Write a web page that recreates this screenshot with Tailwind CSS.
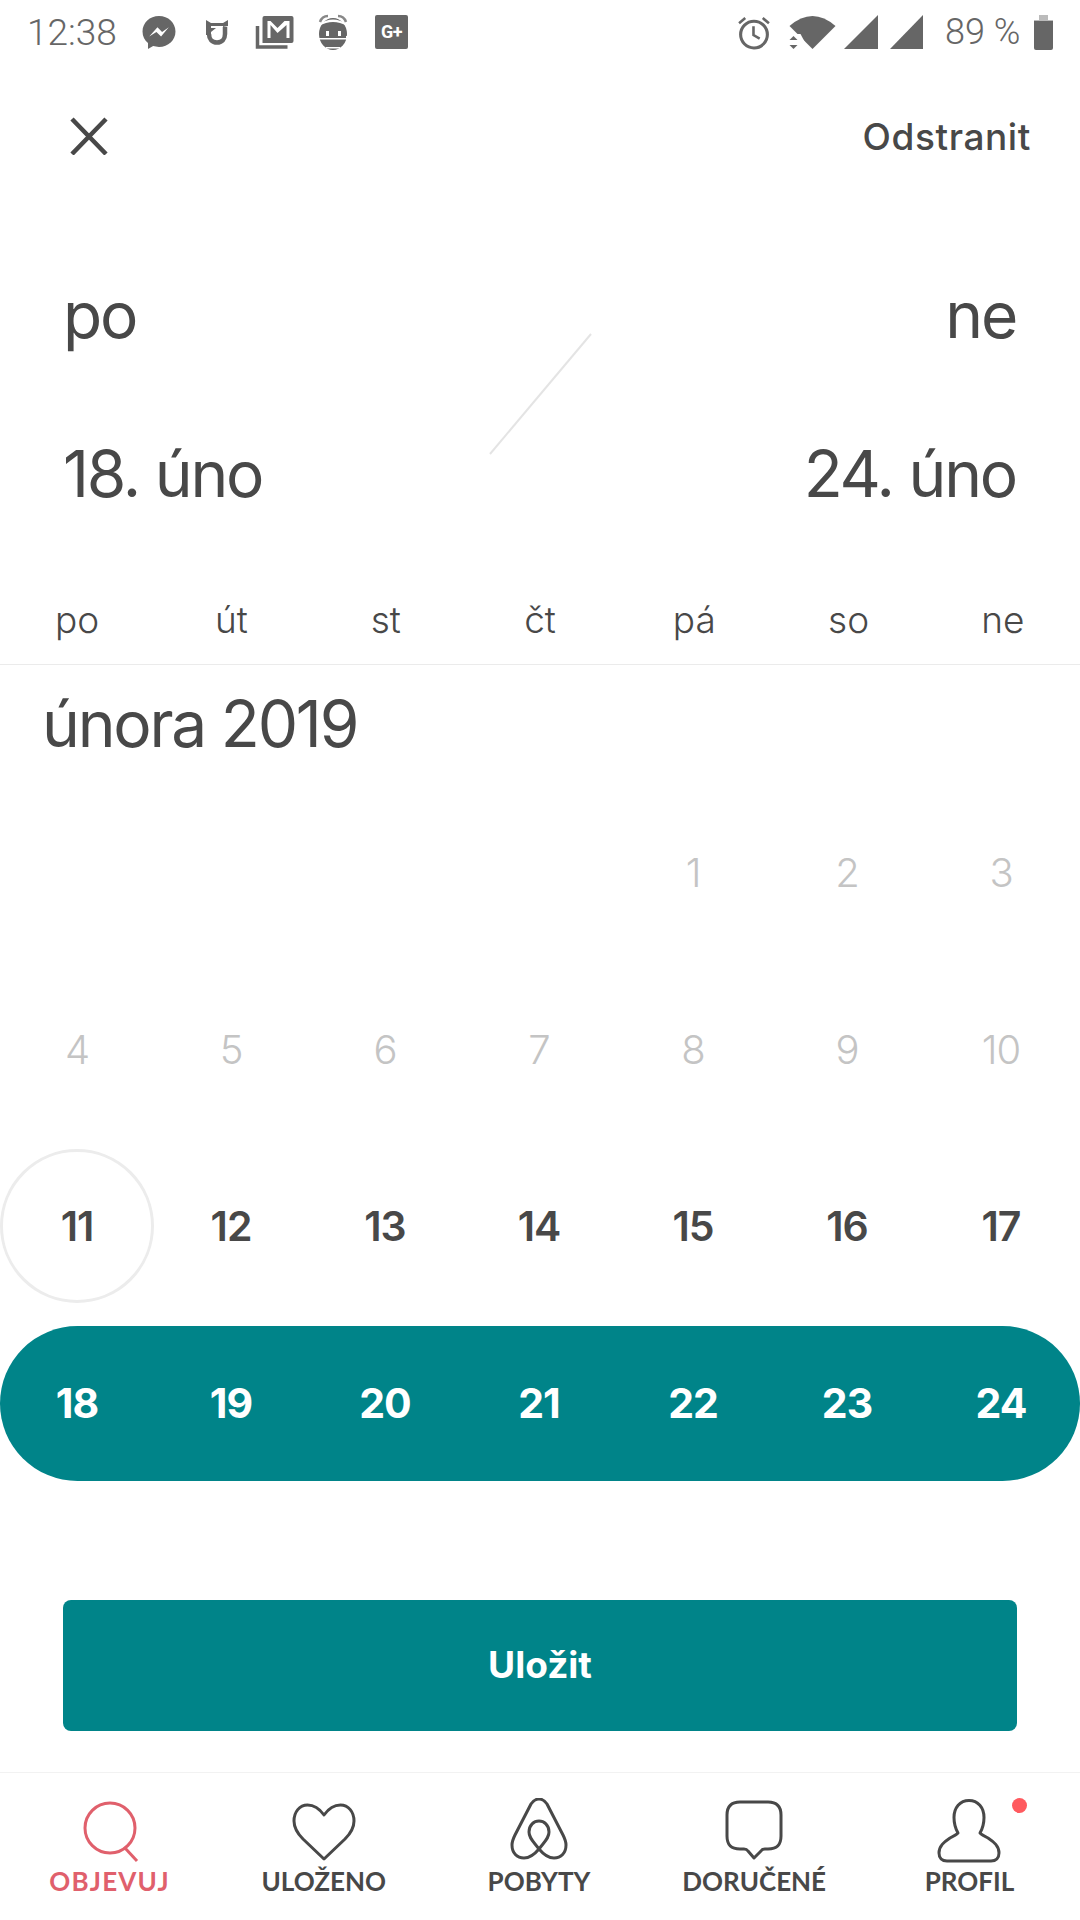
<!DOCTYPE html>
<html><head><meta charset="utf-8"><script src="https://cdn.jsdelivr.net/npm/@tailwindcss/browser@4"></script></head>
<body class="bg-white">
<div class="w-[1080px] h-[1920px] overflow-hidden flex flex-col bg-white text-[#484848] font-['Inter',sans-serif]">
  <!-- status bar -->
  <div class="h-[64px] flex items-center justify-between pl-[27px] pr-[27px] text-[#666] shrink-0">
    <div class="flex items-center">
      <span class="w-[91px] font-['Roboto',sans-serif] text-[37px] font-light leading-none">12:38</span>
      <svg class="ml-[24px]" width="34" height="35" viewBox="0 0 33 34"><path fill="#666" d="M16.500 1C7.500 1 .5 7.600.5 16c0 4.600 2 8.500 5.300 11.300V33l5-2.800c1.800.5 3.700.8 5.700.8 9 0 16-6.600 16-15S25.500 1 16.500 1z"/><path fill="#fff" d="M7 21l8-9 4.500 4.500L26 12l-7.500 9-4.500-4.500z"/></svg>
      <svg class="ml-[30px]" width="22" height="26" viewBox="0 0 22 26"><path fill="#666" d="M0 1l5 3h12l5-3v6l-5 1v-1H5v9H0z"/><path fill="none" stroke="#666" stroke-width="4.500" d="M3 15c0 5 3 8.500 8 8.500s8-3.500 8-8.500V8"/><path fill="#666" d="M5 9h5L5 13z"/></svg>
      <svg class="ml-[27px]" width="39" height="34" viewBox="0 0 38 34"><path fill="#666" d="M9 1h27a2 2 0 0 1 2 2v23a2 2 0 0 1-2 2H7V3a2 2 0 0 1 2-2z"/><path fill="#fff" d="M12 23V6h3l7 7 7-7h5v17h-3V10l-9 8-7-8v13z"/><path fill="none" stroke="#666" stroke-width="3.500" d="M2 11v21h30"/></svg>
      <svg class="ml-[24px]" width="31" height="37" viewBox="0 0 31 37"><ellipse cx="15" cy="20" rx="14" ry="16" fill="#666"/><path fill="#fff" d="M1 10Q15 1 29 10l0 2Q15 4 1 12z"/><path fill="none" stroke="#888" stroke-width="2.500" d="M2 8Q4 2 10 2M28 8Q26 2 20 2"/><path fill="#fff" d="M8 17h3v5H8zM20 17h3v5h-3zM1 24h28v1.500H1zM28 22h2v9h-2zM8 33h14v1.500H8z"/></svg>
      <div class="ml-[26px] w-[33px] h-[34px] rounded-[2px] bg-[#666] flex items-center justify-center text-white text-[18px] font-bold font-['Roboto',sans-serif] leading-none tracking-[-0.5px]">G+</div>
    </div>
    <div class="flex items-center">
      <svg width="32" height="35" viewBox="0 0 31 34"><circle cx="15.500" cy="19" r="13" fill="none" stroke="#666" stroke-width="3"/><path fill="none" stroke="#666" stroke-width="2.500" d="M15 11v8.500l6 3.500M1 8l6-5M30 8l-6-5"/></svg>
      <svg class="ml-[19px]" width="47" height="34" viewBox="0 0 46 34"><path fill="#666" d="M0 11Q23-9 46 11L23 34z"/><path fill="#fff" d="M0 19h11l8 15H0z"/><path fill="#666" d="M4 21l4 4H0zM4 34l4-4H0z"/></svg>
      <svg class="ml-[8px]" width="34" height="34" viewBox="0 0 34 34"><path fill="#666" d="M34 0v34H0z"/></svg>
      <svg class="ml-[11px]" width="35" height="34" viewBox="0 0 33 34"><path fill="#666" d="M33 0v34H0z"/></svg>
      <span class="ml-[21px] w-[75px] whitespace-nowrap font-['Roboto',sans-serif] text-[36px] font-light leading-none">89 %</span>
      <svg class="ml-[14px]" width="19" height="35" viewBox="0 0 19 35"><path fill="#bbb" d="M5 0h9v5h5v6H0V5h5z"/><path fill="#666" d="M0 6h19v27a2 2 0 0 1-2 2H2a2 2 0 0 1-2-2z"/></svg>
    </div>
  </div>
  <!-- header -->
  <div class="h-[144px] flex items-center justify-between pl-[70px] pr-[49px] shrink-0">
    <svg width="38" height="38" viewBox="0 0 38 38"><path stroke="#484848" stroke-width="4.500" d="M2 2l34 35M36 2L2 37"/></svg>
    <span class="whitespace-nowrap text-[37px] font-medium leading-none tracking-[0.6px]">Odstranit</span>
  </div>
  <!-- date summary -->
  <div class="relative h-[376px] pl-[63px] pr-[64px] shrink-0 flex justify-between text-[64px] leading-none font-normal tracking-[-2.2px]">
    <div class="flex flex-col gap-[95px] pt-[75px]"><span>po</span><span>18. úno</span></div>
    <div class="flex flex-col gap-[95px] pt-[75px] items-end"><span>ne</span><span>24. úno</span></div>
    <svg class="absolute left-[488px] top-[125px]" width="104" height="122" viewBox="0 0 104 122"><path stroke="#e4e4e4" stroke-width="2" d="M103 1L2 121"/></svg>
  </div>
  <!-- week header -->
  <div class="h-[81px] shrink-0 grid grid-cols-7 pt-[17px] text-[37px] leading-none border-b border-[#ebebeb] font-light">
    <span class="text-center">po</span><span class="text-center">út</span><span class="text-center">st</span><span class="text-center">čt</span><span class="text-center">pá</span><span class="text-center">so</span><span class="text-center">ne</span>
  </div>
  <!-- month -->
  <div class="pl-[42px] pt-[27px] h-[130px] shrink-0 text-[64px] leading-none font-normal tracking-[-2.2px]">února 2019</div>
  <!-- days -->
  <div class="grid grid-cols-7 pr-[2px] auto-rows-[154px] gap-y-[23px] shrink-0 text-[40px] tracking-[-1px] text-[#c4c4c4] font-light [&>*]:flex [&>*]:items-center [&>*]:justify-center [&>*]:pt-[2px]">
    <span></span><span></span><span></span><span></span><span>1</span><span>2</span><span>3</span>
    <span>4</span><span>5</span><span>6</span><span>7</span><span>8</span><span>9</span><span>10</span>
  </div>
  <div class="mt-[23px] grid grid-cols-7 pr-[2px] h-[154px] shrink-0 text-[41px] tracking-[-1px] font-semibold text-[#484848] [&>*]:flex [&>*]:items-center [&>*]:justify-center [&>*]:pt-[2px]">
    <span class="w-[154px] h-[154px] rounded-full border-[3px] border-[#ececec]">11</span><span>12</span><span>13</span><span>14</span><span>15</span><span>16</span><span>17</span>
  </div>
  <div class="mt-[23px] grid grid-cols-7 pr-[2px] h-[155px] rounded-full bg-[#008489] shrink-0 text-[41px] tracking-[-1px] font-bold text-white [&>*]:flex [&>*]:items-center [&>*]:justify-center">
    <span>18</span><span>19</span><span>20</span><span>21</span><span>22</span><span>23</span><span>24</span>
  </div>
  <!-- save -->
  <div class="mt-[119px] mx-[63px] h-[131px] pb-[2px] rounded-[8px] bg-[#008489] text-white text-[37px] font-bold flex items-center justify-center shrink-0">Uložit</div>
  <!-- nav -->
  <div class="mt-auto h-[148px] shrink-0 border-t border-[#f2f2f2] bg-white text-[26px] font-bold font-['Lato',sans-serif] grid grid-cols-5 pl-[1px] pr-[3px] pt-[25px] [&>*]:flex [&>*]:flex-col [&>*]:items-center">
    <div class="text-[#e0606c]">
      <svg class="ml-[2px]" width="60" height="66" viewBox="0 0 60 66"><circle cx="30" cy="30" r="25" fill="none" stroke="#e0606c" stroke-width="3"/><path stroke="#e0606c" stroke-width="3" d="M45 50l12 13"/></svg>
      <span class="mt-[4px] ml-[2px] leading-none tracking-[1.2px]">OBJEVUJ</span>
    </div>
    <div>
      <svg width="64" height="66" viewBox="0 0 64 66"><path fill="none" stroke="#484848" stroke-width="3" stroke-linejoin="round" d="M32 17C27 10 21 7 15.500 7 7.500 7 2 14 2 23c0 7 4 13 9 18l21 20 21-20c5-5 9-11 9-18 0-9-5.500-16-13.500-16C43 7 37 10 32 17z"/></svg>
      <span class="mt-[4px] leading-none">ULOŽENO</span>
    </div>
    <div>
      <svg width="60" height="66" viewBox="0 0 60 66"><path fill="none" stroke="#484848" stroke-width="3" stroke-linejoin="round" d="M30 51C24 43 20 40 20 34 20 27 25 23 30 23 35 23 40 27 40 34 40 40 36 43 30 51 25 57 20 60 15 60 8 60 3 55 3 47 3 44 4 41 6 37L22 6C24 3 27 1 30 1 33 1 36 3 38 6L54 37C56 41 57 44 57 47 57 55 52 60 45 60 40 60 35 57 30 51z"/></svg>
      <span class="mt-[4px] leading-none">POBYTY</span>
    </div>
    <div>
      <svg width="58" height="66" viewBox="0 0 58 66"><path fill="none" stroke="#484848" stroke-width="3" stroke-linejoin="round" d="M15 4h28c9 0 13 5 13 13v21c0 9-4 13-13 13h-3c-2 0-3 .5-4 2l-7 7-6-7c-1-1.500-2-2-4-2h-4C6 51 2 47 2 38V17C2 9 6 4 15 4z"/></svg>
      <span class="mt-[4px] leading-none">DORUČENÉ</span>
    </div>
    <div class="relative">
      <svg width="66" height="66" viewBox="0 0 66 66"><path fill="none" stroke="#484848" stroke-width="3" stroke-linejoin="round" d="M33 2.500c-9 0-15 7-15 17 0 7 2 12 4 15.500-1 1-4 3-8 5-6 4-11 8-11 15 0 5 3 8 8 8h44c5 0 8-3 8-8 0-7-5-11-11-15-4-2-7-4-8-5 2-3.500 4-8.500 4-15.500C48 9.500 42 2.500 33 2.500z"/></svg>
      <span class="mt-[4px] leading-none">PROFIL</span>
      <span class="absolute left-[150px] top-[0px] w-[15px] h-[15px] rounded-full bg-[#ff5a5f]"></span>
    </div>
  </div>
</div>
</body></html>
